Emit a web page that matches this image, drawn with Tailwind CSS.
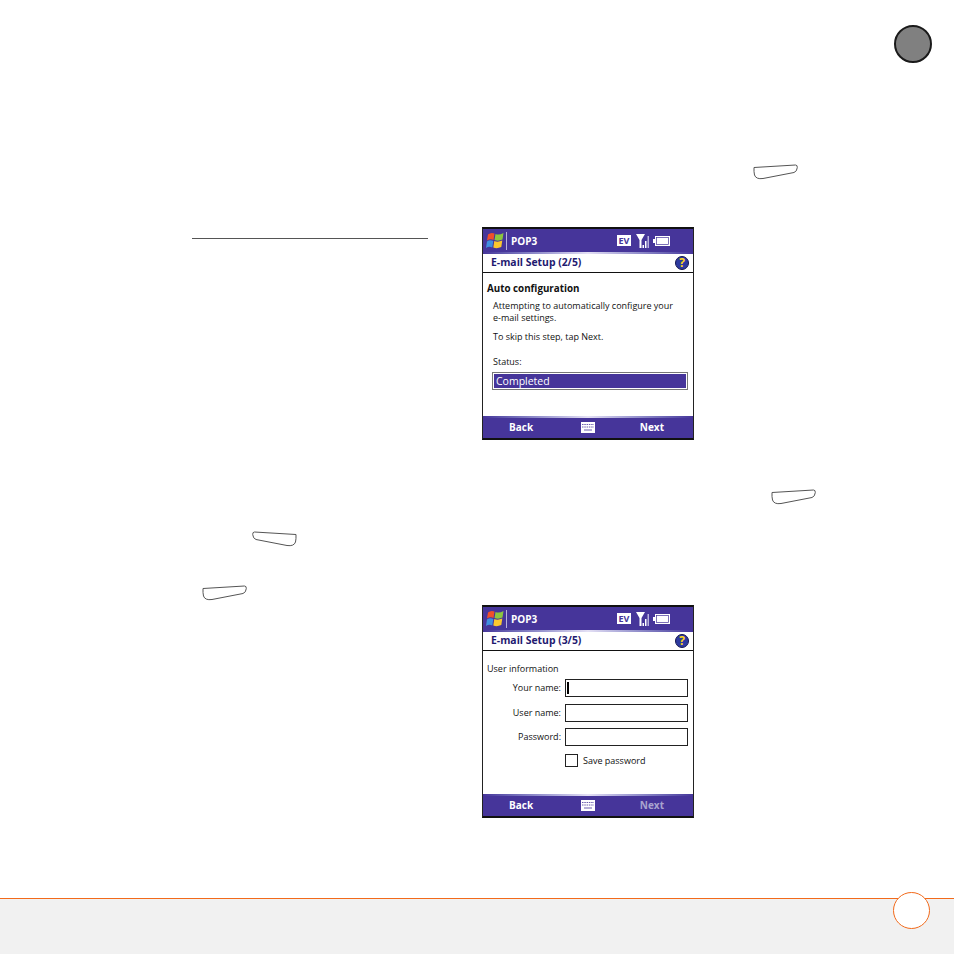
<!DOCTYPE html>
<html lang="en">
<head>
<meta charset="UTF-8">
<title>E-mail Setup</title>
<script src="https://cdn.jsdelivr.net/npm/@tailwindcss/browser@4"></script>
</head>
<body class="bg-white">
<div class="relative w-[954px] h-[954px] overflow-hidden flex flex-col font-['Open_Sans',sans-serif]">

  <!-- page tab marker -->
  <div class="absolute left-[894px] top-[25px] w-[38px] h-[38px] rounded-full bg-[#808080] border-2 border-[#1a1a1a]"></div>

  <div class="flex-1 flex pl-[192px]">
    <!-- left column -->
    <div class="w-[236px] pt-[238px]">
      <div class="h-px bg-[#555555]"></div>
      <div class="pt-[292px] pl-[59px]">
        <svg class="block -scale-x-100" width="46" height="18" viewBox="0 0 46 18"><path d="M1 3.500 L42.500 1 Q44.500 1 44.300 3.500 Q44 7.500 41 8.500 L10 14.500 Q3 15.500 1.500 11 Q0.800 8 1 3.500 Z" fill="white" stroke="#555" stroke-width="1"/></svg>
      </div>
      <div class="pt-[36px] pl-[10px]">
        <svg class="block" width="46" height="18" viewBox="0 0 46 18"><path d="M1 3.500 L42.500 1 Q44.500 1 44.300 3.500 Q44 7.500 41 8.500 L10 14.500 Q3 15.500 1.500 11 Q0.800 8 1 3.500 Z" fill="white" stroke="#555" stroke-width="1"/></svg>
      </div>
    </div>

    <!-- right column -->
    <div class="relative ml-[54px] w-[340px]">
      <svg class="absolute left-[271px] top-[164px]" width="46" height="18" viewBox="0 0 46 18"><path d="M1 3.500 L42.500 1 Q44.500 1 44.300 3.500 Q44 7.500 41 8.500 L10 14.500 Q3 15.500 1.500 11 Q0.800 8 1 3.500 Z" fill="white" stroke="#555" stroke-width="1"/></svg>
      <svg class="absolute left-[289px] top-[489px]" width="46" height="18" viewBox="0 0 46 18"><path d="M1 3.500 L42.500 1 Q44.500 1 44.300 3.500 Q44 7.500 41 8.500 L10 14.500 Q3 15.500 1.500 11 Q0.800 8 1 3.500 Z" fill="white" stroke="#555" stroke-width="1"/></svg>

      <!-- screen 2/5 -->
      <div class="mt-[227px] w-[212px] h-[213px] flex flex-col border-x border-[#222222] border-t-2 border-t-[#111111] border-b-2 border-b-[#111111] bg-white">
        <div class="h-[23px] flex items-center bg-[#46359a] text-white pl-[3px] pr-[23px]">
          <svg width="18" height="18" viewBox="0 0 18 18"><path d="M2 2.500 Q5 0 8.500 1.500 L7.500 8 Q4.500 6.500 1 8.500 Z" fill="#f0502a"/><path d="M9.500 2 Q13 3.500 17.500 1 L16.500 7.500 Q12.500 9.500 8.500 8 Z" fill="#8cc63f"/><path d="M1 9.500 Q4 7.500 7.300 9 L6.300 15.500 Q3 14 0 16 Z" fill="#3f8fe0"/><path d="M8.300 9 Q12 10.500 16.300 8.500 L15.300 15 Q11 17 7.300 15.500 Z" fill="#fbc82e"/></svg>
          <div class="w-px h-[18px] bg-[#b9b2dd] ml-[2px] mr-[4px]"></div>
          <span class="text-[10px] font-bold leading-none">POP3</span>
          <span class="ml-auto w-[14px] h-[11px] bg-white text-[#46359a] text-[9px] font-bold leading-[11px] text-center">EV</span>
          <svg class="ml-[5px]" width="14" height="16" viewBox="0 0 14 16"><path d="M0 1 H9 L5.500 7 V15 H3.500 V7 Z" fill="white"/><rect x="6.500" y="12" width="1.500" height="3" fill="white"/><rect x="9" y="8" width="1.500" height="7" fill="white"/><rect x="11.500" y="3" width="1.500" height="12" fill="#b9b2dd"/></svg>
          <svg class="ml-[3px]" width="17" height="10" viewBox="0 0 17 10"><path d="M0 3 H2 V0 H17 V10 H2 V7 H0 Z" fill="white"/><rect x="3.500" y="1.500" width="12" height="7" fill="white" stroke="#46359a" stroke-width="0.700"/></svg>
        </div>
        <div class="h-[2px] bg-linear-to-r from-[#46359a] via-[#e4e0f4] to-[#46359a]"></div>
        <div class="h-[18px] flex items-center justify-between pl-[8px] pr-[4px] border-b border-[#111111] box-content">
          <span class="text-[#1f1a70] text-[10.400px] font-bold leading-none pb-px">E-mail Setup (2/5)</span>
          <span class="w-[14px] h-[14px] rounded-full bg-[#2d3aa0] border border-[#15154f] text-[#ffd81a] text-[12px] font-bold leading-[12px] text-center">?</span>
        </div>
        <div class="flex-1 px-[4px] text-[#111111] text-[9px] leading-[12px]">
          <div class="mt-[10px] font-bold text-[9.800px]">Auto configuration</div>
          <div class="mt-[5px] pl-[6px]">Attempting to automatically configure your<br>e-mail settings.</div>
          <div class="mt-[7px] pl-[6px]">To skip this step, tap Next.</div>
          <div class="mt-[13px] pl-[6px]">Status:</div>
          <div class="mt-[4px] ml-[5px] w-[196px] h-[18px] border border-[#777777] bg-white p-px">
            <div class="h-full bg-[#46359a] text-white text-[10.500px] leading-[14px] pl-[2px]">Completed</div>
          </div>
        </div>
        <div class="h-[2px] bg-linear-to-r from-[#46359a] via-[#e4e0f4] to-[#46359a]"></div>
        <div class="h-[20px] flex items-center bg-[#46359a] text-white text-[10px] font-bold pl-[26px] pr-[29px] pb-px">
          <span>Back</span>
          <svg class="ml-[48px]" width="14" height="11" viewBox="0 0 14 11"><rect width="14" height="11" fill="white"/><path d="M1 2.500 H13 M1 5 H13" stroke="#46359a" stroke-width="0.800" stroke-dasharray="1.500 0.800"/><path d="M3 8 H11" stroke="#46359a" stroke-width="0.800"/></svg>
          <span class="ml-auto">Next</span>
        </div>
      </div>

      <!-- screen 3/5 -->
      <div class="mt-[165px] w-[212px] h-[213px] flex flex-col border-x border-[#222222] border-t-2 border-t-[#111111] border-b-2 border-b-[#111111] bg-white">
        <div class="h-[23px] flex items-center bg-[#46359a] text-white pl-[3px] pr-[23px]">
          <svg width="18" height="18" viewBox="0 0 18 18"><path d="M2 2.500 Q5 0 8.500 1.500 L7.500 8 Q4.500 6.500 1 8.500 Z" fill="#f0502a"/><path d="M9.500 2 Q13 3.500 17.500 1 L16.500 7.500 Q12.500 9.500 8.500 8 Z" fill="#8cc63f"/><path d="M1 9.500 Q4 7.500 7.300 9 L6.300 15.500 Q3 14 0 16 Z" fill="#3f8fe0"/><path d="M8.300 9 Q12 10.500 16.300 8.500 L15.300 15 Q11 17 7.300 15.500 Z" fill="#fbc82e"/></svg>
          <div class="w-px h-[18px] bg-[#b9b2dd] ml-[2px] mr-[4px]"></div>
          <span class="text-[10px] font-bold leading-none">POP3</span>
          <span class="ml-auto w-[14px] h-[11px] bg-white text-[#46359a] text-[9px] font-bold leading-[11px] text-center">EV</span>
          <svg class="ml-[5px]" width="14" height="16" viewBox="0 0 14 16"><path d="M0 1 H9 L5.500 7 V15 H3.500 V7 Z" fill="white"/><rect x="6.500" y="12" width="1.500" height="3" fill="white"/><rect x="9" y="8" width="1.500" height="7" fill="white"/><rect x="11.500" y="3" width="1.500" height="12" fill="#b9b2dd"/></svg>
          <svg class="ml-[3px]" width="17" height="10" viewBox="0 0 17 10"><path d="M0 3 H2 V0 H17 V10 H2 V7 H0 Z" fill="white"/><rect x="3.500" y="1.500" width="12" height="7" fill="white" stroke="#46359a" stroke-width="0.700"/></svg>
        </div>
        <div class="h-[2px] bg-linear-to-r from-[#46359a] via-[#e4e0f4] to-[#46359a]"></div>
        <div class="h-[18px] flex items-center justify-between pl-[8px] pr-[4px] border-b border-[#111111] box-content">
          <span class="text-[#1f1a70] text-[10.400px] font-bold leading-none pb-px">E-mail Setup (3/5)</span>
          <span class="w-[14px] h-[14px] rounded-full bg-[#2d3aa0] border border-[#15154f] text-[#ffd81a] text-[12px] font-bold leading-[12px] text-center">?</span>
        </div>
        <div class="flex-1 px-[4px] text-[#111111] text-[9px] leading-[12px]">
          <div class="mt-[12px]">User information</div>
          <div class="mt-[4px] flex flex-col gap-[7px]">
            <div class="flex items-center h-[18px]">
              <span class="w-[74px] text-right">Your name:</span>
              <div class="ml-[4px] w-[123px] h-[18px] border border-[#222222] flex items-center pl-[1px]"><div class="w-[2px] h-[12px] bg-black"></div></div>
            </div>
            <div class="flex items-center h-[18px]">
              <span class="w-[74px] text-right">User name:</span>
              <div class="ml-[4px] w-[123px] h-[18px] border border-[#222222]"></div>
            </div>
            <div class="flex items-center h-[18px] -mt-px">
              <span class="w-[74px] text-right">Password:</span>
              <div class="ml-[4px] w-[123px] h-[18px] border border-[#222222]"></div>
            </div>
            <div class="flex items-center h-[14px] pl-[78px]">
              <div class="w-[13px] h-[13px] border border-[#222222]"></div>
              <span class="ml-[5px] pt-px">Save password</span>
            </div>
          </div>
        </div>
        <div class="h-[2px] bg-linear-to-r from-[#46359a] via-[#e4e0f4] to-[#46359a]"></div>
        <div class="h-[20px] flex items-center bg-[#46359a] text-white text-[10px] font-bold pl-[26px] pr-[29px] pb-px">
          <span>Back</span>
          <svg class="ml-[48px]" width="14" height="11" viewBox="0 0 14 11"><rect width="14" height="11" fill="white"/><path d="M1 2.500 H13 M1 5 H13" stroke="#46359a" stroke-width="0.800" stroke-dasharray="1.500 0.800"/><path d="M3 8 H11" stroke="#46359a" stroke-width="0.800"/></svg>
          <span class="ml-auto text-[#a9a3cf]">Next</span>
        </div>
      </div>
    </div>
  </div>

  <!-- footer -->
  <div class="relative h-[56px] bg-[#f1f1f1] border-t border-[#f26a1b]">
    <div class="absolute left-[893px] top-[-7px] w-[37px] h-[37px] rounded-full bg-white border border-[#f26a1b]"></div>
  </div>
</div>
</body>
</html>
